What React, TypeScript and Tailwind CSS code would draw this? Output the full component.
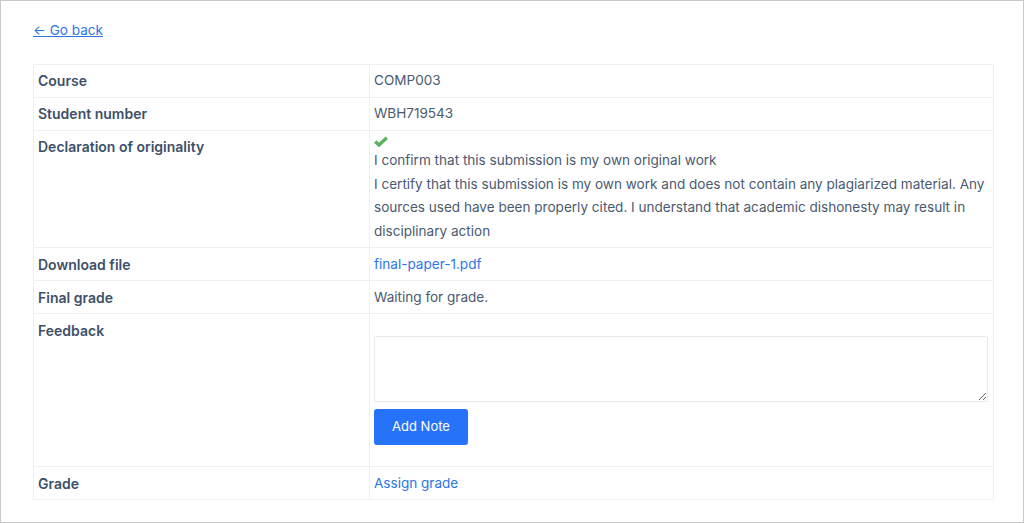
export default function App() {
  const th = "border border-[#eef0f3] px-[4px] pt-[5px] pb-[3px] align-top text-left text-[14px] font-semibold text-[#3e5068] w-[336px]";
  const thUp = "border border-[#eef0f3] px-[4px] pt-[4px] pb-[4px] align-top text-left text-[14px] font-semibold text-[#3e5068] w-[336px]";
  const td = "border border-[#eef0f3] px-[4px] pt-[5px] pb-[3px] align-top text-[#4a5a70]";
  const tdUp = "border border-[#eef0f3] px-[4px] pt-[4px] pb-[4px] align-top text-[#4a5a70]";
  return (
    <div className="h-[523px] w-[1024px] overflow-hidden border border-[#c9c9c9] bg-white pl-[32px] pr-[29px] pt-[18px] font-['Inter',sans-serif] text-[13.55px] leading-[23.6px]">
      <a href="#" className="block text-[#2b76e5] underline h-[45px]">← Go back</a>
      <table className="w-[961px] table-fixed border-collapse">
        <tbody>
          <tr className="h-[33px]"><th className={thUp}>Course</th><td className={tdUp}>COMP003</td></tr>
          <tr className="h-[33px]"><th className={thUp}>Student number</th><td className={tdUp}>WBH719543</td></tr>
          <tr className="h-[117px]">
            <th className={thUp}>Declaration of originality</th>
            <td className={td}>
              <svg viewBox="0 0 14 11" className="block h-[11px] w-[14px] mb-[2px]"><path d="M1.2 5.4 L5 9 L12.8 1.8" fill="none" stroke="#5cb25f" strokeWidth="3.4" /></svg>
              <div>I confirm that this submission is my own original work</div>
              <div>I certify that this submission is my own work and does not contain any plagiarized material. Any sources used have been properly cited. I understand that academic dishonesty may result in disciplinary action</div>
            </td>
          </tr>
          <tr className="h-[33px]"><th className={th}>Download file</th><td className={td}><a href="#" className="text-[#2b76e5]">final-paper-1.pdf</a></td></tr>
          <tr className="h-[33px]"><th className={th}>Final grade</th><td className={td}>Waiting for grade.</td></tr>
          <tr className="h-[153px]">
            <th className={th}>Feedback</th>
            <td className={td}>
              <textarea className="mt-[17px] block h-[66px] w-[614px] rounded-[2px] border border-[#e8eaed] bg-white" />
              <button className="mt-[7px] block h-[36px] w-[94px] rounded-[3px] bg-[#2673fa] text-[13px] font-normal text-white">Add Note</button>
            </td>
          </tr>
          <tr className="h-[33px]"><th className={th}>Grade</th><td className={td}><a href="#" className="text-[#2b76e5]">Assign grade</a></td></tr>
        </tbody>
      </table>
    </div>
  );
}
